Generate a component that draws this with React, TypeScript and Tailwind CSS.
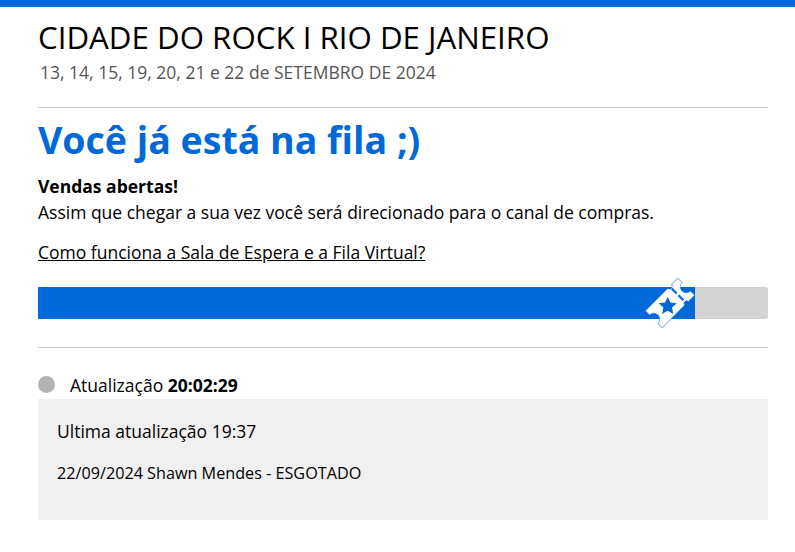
import React from 'react';

const Ticket = () => (
  <svg viewBox="-30 -30 60 60" className="absolute right-[-5px] top-[-14px] w-[60px] h-[60px]">
    <g transform="rotate(-45)">
      <path
        d="M-23 -12 H9 A2.5 2.5 0 0 0 14 -12 H23 V-6 A6 6 0 0 0 23 6 V12 H14 A2.5 2.5 0 0 0 9 12 H-23 V6 A6 6 0 0 0 -23 -6 Z"
        fill="#fff"
        stroke="#0069d9"
        strokeOpacity="0.5"
        strokeWidth="1"
      />
      <path d="M11.5 -9 V9" stroke="#0069d9" strokeWidth="2.2" strokeDasharray="7 2.5" />
    </g>
    <path
      d="M-2.3 -6.3 L0.35 -0.44 L6.73 0.26 L1.98 4.59 L3.28 10.89 L-2.3 7.7 L-7.88 10.89 L-6.58 4.59 L-11.33 0.26 L-4.95 -0.44 Z"
      fill="#0069d9"
    />
  </svg>
);

export default function App() {
  return (
    <div className="min-h-[552px] bg-white font-['Open_Sans',sans-serif] text-black">
      <div className="h-[7px] bg-[#0069d9]" />
      <div className="ml-[38px] w-[730px]">
        <h1 className="pt-[11px] text-[31.25px] leading-[38px] font-normal">CIDADE DO ROCK I RIO DE JANEIRO</h1>
        <p className="ml-[2px] mt-[4px] text-[17.5px] leading-[24px] text-[#555]">13, 14, 15, 19, 20, 21 e 22 de SETEMBRO DE 2024</p>
        <hr className="mt-[23px] border-[#ccc]" />
        <h2 className="mt-[7px] text-[37.5px] leading-[50px] font-bold text-[#0069d9]">Você já está na fila ;)</h2>
        <p className="mt-[8px] text-[17.5px] leading-[26px] font-bold">Vendas abertas!</p>
        <p className="text-[17.5px] leading-[26px]">Assim que chegar a sua vez você será direcionado para o canal de compras.</p>
        <a className="mt-[14px] block text-[17.5px] leading-[26px] underline">Como funciona a Sala de Espera e a Fila Virtual?</a>
        <div className="mt-[22px] h-[32px] rounded-r-[3px] bg-[#d3d3d3]">
          <div className="relative h-full w-[657px] bg-[#0069d9]">
            <Ticket />
          </div>
        </div>
        <hr className="mt-[28px] border-[#ccc]" />
        <div className="mt-[23px] flex h-[28px] items-center">
          <span className="mb-[2px] h-[17px] w-[17px] rounded-full bg-[#b3b3b3]" />
          <span className="ml-[15px] text-[17.5px] leading-[24px]">Atualização <b>20:02:29</b></span>
        </div>
        <div className="h-[121px] bg-[#f0f0f0] px-[19px] pt-[20px]">
          <p className="text-[17.5px] leading-[24px]">Ultima atualização 19:37</p>
          <p className="mt-[18px] text-[16.2px] leading-[24px]">22/09/2024 Shawn Mendes - ESGOTADO</p>
        </div>
      </div>
    </div>
  );
}
